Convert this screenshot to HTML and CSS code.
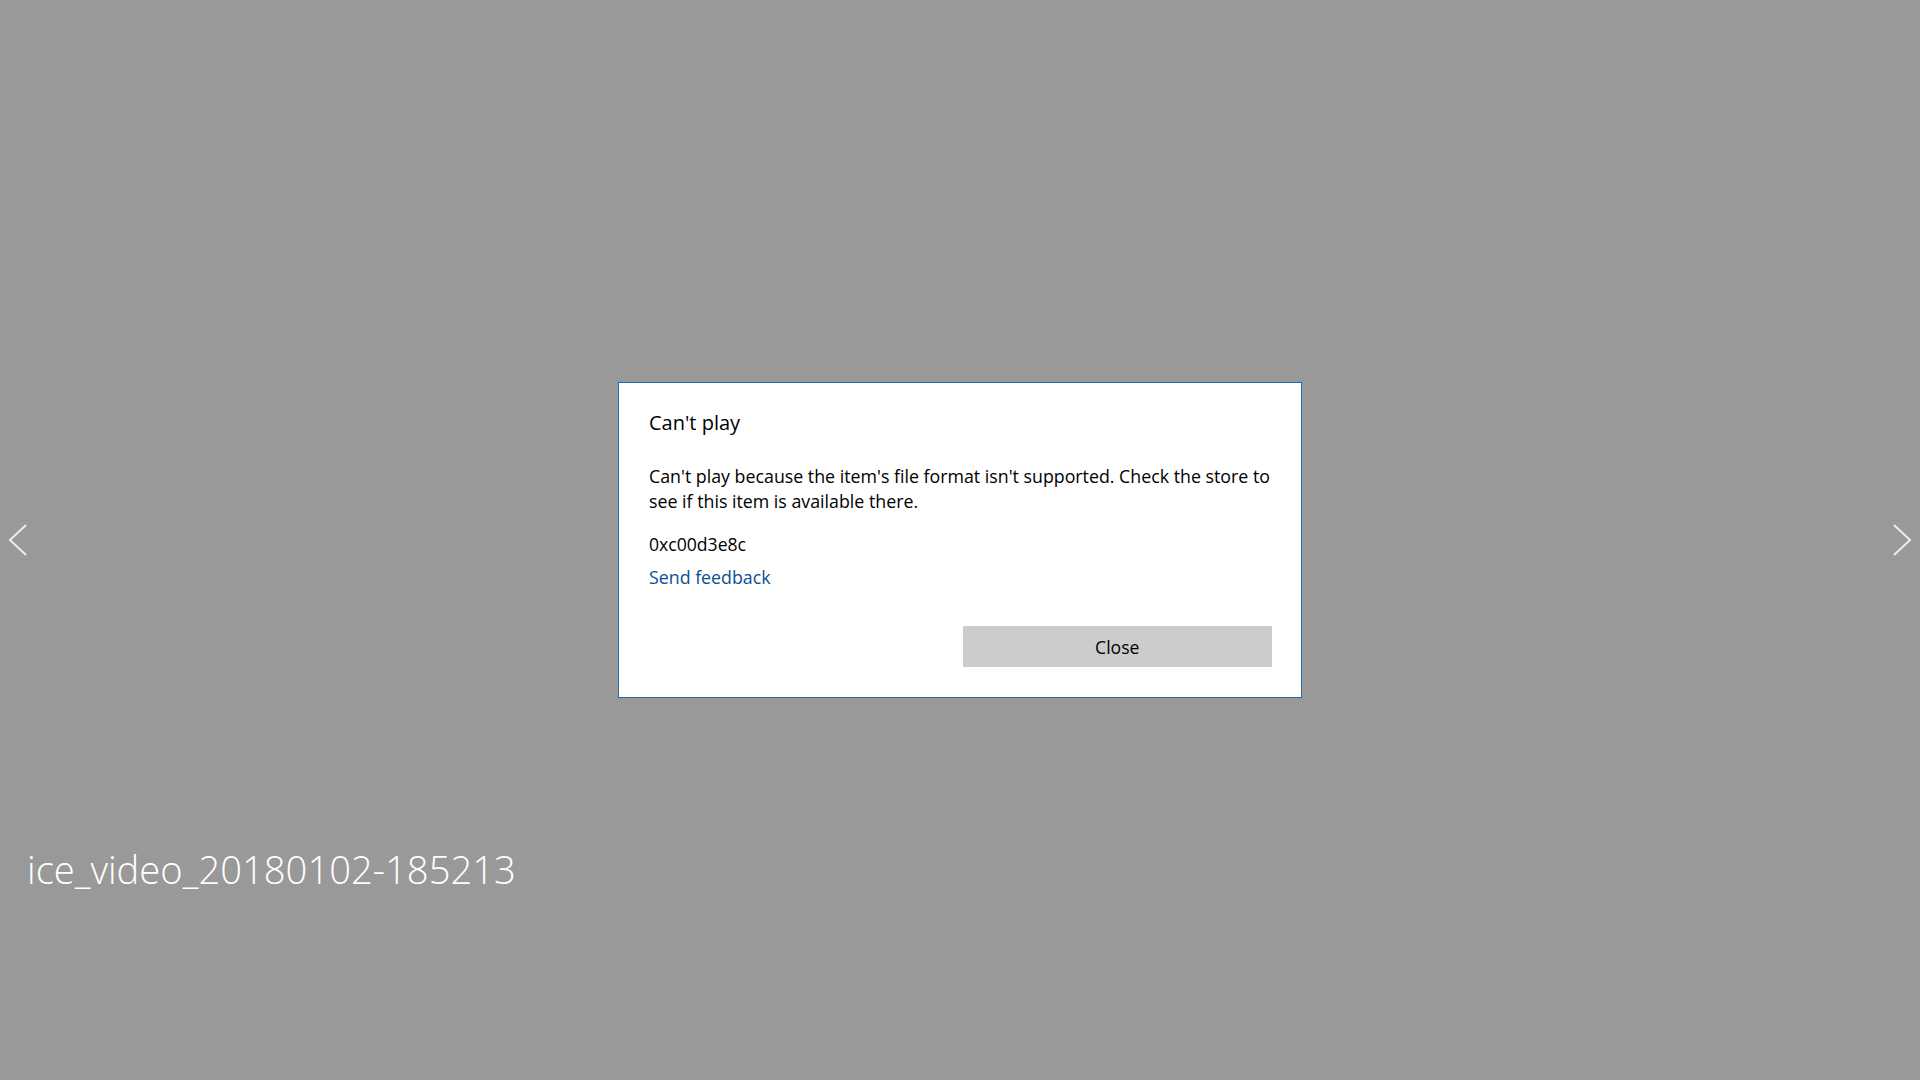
FILE: index.html
```html
<!DOCTYPE html>
<html lang="en">
<head>
<meta charset="utf-8">
<title>Can't play</title>
<link rel="stylesheet" href="styles.css">
</head>
<body>
<main class="stage">
  <button class="nav nav-prev" aria-label="Previous">
    <svg width="20" height="34" viewBox="0 0 20 34"><polyline points="17,1 1,16 17,31" fill="none" stroke="#ececec" stroke-width="2"/></svg>
  </button>
  <button class="nav nav-next" aria-label="Next">
    <svg width="20" height="34" viewBox="0 0 20 34"><polyline points="2,1 18,16 2,31" fill="none" stroke="#ececec" stroke-width="2"/></svg>
  </button>

  <section class="dialog" role="dialog">
    <h1 class="dialog-title">Can't play</h1>
    <p class="dialog-body">Can't play because the item's file format isn't supported. Check the store to<br>see if this item is available there.</p>
    <p class="dialog-code">0xc00d3e8c</p>
    <a class="dialog-link" href="#">Send feedback</a>
    <div class="dialog-buttons">
      <span></span>
      <button class="btn">Close</button>
    </div>
  </section>

  <div class="filename">ice_video_20180102-185213</div>
</main>
</body>
</html>
```

FILE: styles.css
```css
html, body {
  margin: 0;
  padding: 0;
  height: 100%;
}
body {
  background: #999999;
  font-family: "Open Sans", "Noto Sans", sans-serif;
  overflow: hidden;
}
.stage {
  position: relative;
  height: 100vh;
  display: grid;
  place-items: center;
}
.nav {
  position: absolute;
  top: 524px;
  background: none;
  border: 0;
  padding: 0;
  width: 20px;
  height: 34px;
  display: block;
}
.nav svg { display: block; }
.nav-prev { left: 9px; }
.nav-next { left: 1892px; }

.dialog {
  box-sizing: border-box;
  width: 684px;
  background: #ffffff;
  border: 1px solid #1f6bb5;
  padding: 26px 29px 30px 30px;
  display: flex;
  flex-direction: column;
  align-items: flex-start;
  color: #000;
}
.dialog-title {
  margin: 0;
  font-size: 20px;
  font-weight: 400;
  line-height: 28px;
}
.dialog-body {
  margin: 27px 0 0;
  font-size: 17.8px;
  line-height: 25px;
  white-space: nowrap;
}
.dialog-code {
  margin: 18px 0 0;
  font-size: 17.6px;
  line-height: 25px;
}
.dialog-link {
  margin-top: 8px;
  font-size: 17.8px;
  line-height: 25px;
  color: #0a5091;
  text-decoration: none;
}
.dialog-buttons {
  align-self: stretch;
  margin-top: 36px;
  display: grid;
  grid-template-columns: 1fr 1fr;
  column-gap: 4px;
}
.btn {
  height: 41px;
  border: 0;
  background: #cccccc;
  color: #000;
  font-family: inherit;
  font-size: 17.6px;
  padding: 0;
}
.filename {
  position: absolute;
  left: 27px;
  top: 843px;
  color: #ffffff;
  font-size: 38.2px;
  font-weight: 300;
  line-height: 52px;
  white-space: nowrap;
}
```
